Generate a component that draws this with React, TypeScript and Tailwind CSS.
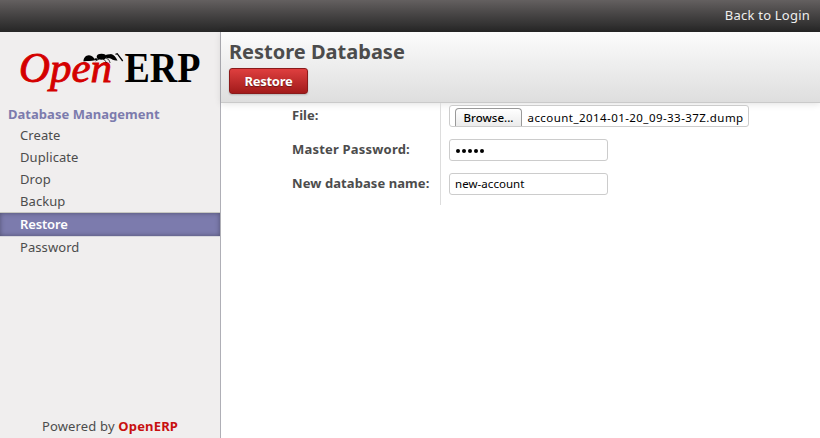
const sans = "font-['Noto_Sans','Open_Sans',sans-serif]";

function Logo() {
  return (
    <svg className="block h-[64px] w-[190px]" viewBox="16 38 190 64" role="img" aria-label="OpenERP">
      <text x="19" y="82" fontFamily="'Liberation Serif', serif" fontSize="41.5" fontStyle="italic" fill="#d40000" stroke="#d40000" strokeWidth="0.9" textLength="93" lengthAdjust="spacingAndGlyphs">Open</text>
      <text x="124.5" y="82" fontFamily="'Liberation Serif', serif" fontSize="42.5" fontWeight="bold" fill="#000" textLength="76" lengthAdjust="spacingAndGlyphs">ERP</text>
      <g fill="#000">
        <path d="M83.5 61.6C83.2 58 86 55 89 55.2C92 55.5 94 57.5 95 60.2C91 61.4 88 60.4 83.5 61.6Z" />
        <ellipse cx="96" cy="59.2" rx="1.8" ry="1" />
        <ellipse cx="101.5" cy="56.8" rx="4.8" ry="3" />
        <ellipse cx="109.3" cy="56.2" rx="4" ry="2" />
        <path d="M110 54.4C113 53.6 115.5 56.5 117.5 60.4C114.5 61 112 59.5 109.5 57.8Z" />
      </g>
      <g fill="none" stroke="#000" strokeWidth="0.7">
        <path d="M99 59.3l-3.5 1.7M103 59.3l2 1 1.5 2.7M106 58l3 2 1.2 3" />
        <path d="M115.5 54.3l1.7-.6 5.5 7.3" strokeWidth="1.3" />
      </g>
    </svg>
  );
}

const items = ["Create", "Duplicate", "Drop", "Backup", "Restore", "Password"];

function Sidebar() {
  return (
    <aside className="flex w-[221px] shrink-0 flex-col border-r border-[#afafb6] bg-[#f0eeee]">
      <div className="h-[71px] pl-4 pt-[6px]">
        <Logo />
      </div>
      <h3 className="h-[21px] pl-2 text-[13px] font-bold leading-[22px] tracking-[0.03px] text-[#7c7bad]">Database Management</h3>
      <ul className="text-[13px] leading-[22px] tracking-[0.08px] text-[#4c4c4c]">
        {items.map((item) =>
          item === "Restore" ? (
            <li key={item} className="mt-px h-[23px] bg-[#7c7bad] pl-5 font-semibold leading-[23px] tracking-[-0.15px] text-white shadow-[inset_0_0_5px_rgba(0,0,0,0.35),0_-1px_0_#c8c8c2,0_1px_0_#d7d7dd]">{item}</li>
          ) : (
            <li key={item} className="h-[22px] pl-5">{item}</li>
          )
        )}
      </ul>
      <footer className="mt-auto h-[23px] text-center text-[13px] leading-[22px] tracking-[0.17px] text-[#4c4c4c]">
        Powered by <span className="font-bold text-[#c81010]">OpenERP</span>
      </footer>
    </aside>
  );
}

const label = "w-[148px] text-[13px] font-bold leading-[18px] text-[#4c4c4c]";
const field = "rounded-[3px] border border-[#ccc] bg-white text-[11.5px] text-black";

export default function App() {
  return (
    <div className={`flex h-[438px] w-[820px] flex-col overflow-hidden bg-white ${sans}`}>
      <nav className="flex h-8 shrink-0 justify-end bg-linear-to-b from-[#646060] to-[#262626] pr-2.5 text-[13px] leading-[31px] tracking-[0.22px] text-[#eee]">
        <span>Back to Login</span>
      </nav>
      <div className="flex flex-1">
        <Sidebar />
        <main className="flex-1">
          <header className="h-[71px] border-b border-[#cacaca] bg-linear-to-b from-[#fcfcfc] to-[#dedede] pl-2 pt-2 shadow-[0_1px_7px_rgba(0,0,0,0.12)]">
            <h2 className="h-7 text-[20px] font-bold leading-6 text-[#4c4c4c]">Restore Database</h2>
            <button className="block h-[26px] w-[79px] rounded-[3px] border border-[#8a1a1a] bg-linear-to-b from-[#df3f3f] to-[#a21a1a] text-[13px] font-bold leading-6 tracking-[-0.3px] text-white shadow-[0_1px_2px_rgba(0,0,0,0.2)] [text-shadow:0_1px_1px_rgba(0,0,0,0.4)]">Restore</button>
          </header>
          <form className="flex pl-[71px]">
            <div className="flex h-[102px] w-[149px] shrink-0 flex-col gap-4 border-r border-[#ddd] pt-[3px]">
              <label className={label}>File:</label>
              <label className={`${label} tracking-[0.2px]`}>Master Password:</label>
              <label className={`${label} tracking-[0.08px]`}>New database name:</label>
            </div>
            <div className="flex flex-col gap-3 pl-2 pt-[2px]">
              <div className={`${field} flex h-[22px] w-[300px] overflow-hidden pl-[5px]`}>
                <span className="mt-[2px] h-5 w-[67px] shrink-0 rounded-t-[4px] border border-b-0 border-[#999] bg-linear-to-b from-white to-[#e9e9e9] text-center font-medium leading-[18px]">Browse...</span>
                <span className="ml-[5.5px] whitespace-nowrap leading-[23px] tracking-[0.44px]">account_2014-01-20_09-33-37Z.dump</span>
              </div>
              <div className={`${field} flex h-[22px] w-[159px] items-center gap-[2px] pl-[6px] pt-px`}>
                {[0, 1, 2, 3, 4].map((n) => (
                  <i key={n} className="size-1 rounded-full bg-black" />
                ))}
              </div>
              <div className={`${field} h-[22px] w-[159px] pl-[5px] leading-5 tracking-[0.05px]`}>new-account</div>
            </div>
          </form>
        </main>
      </div>
    </div>
  );
}
